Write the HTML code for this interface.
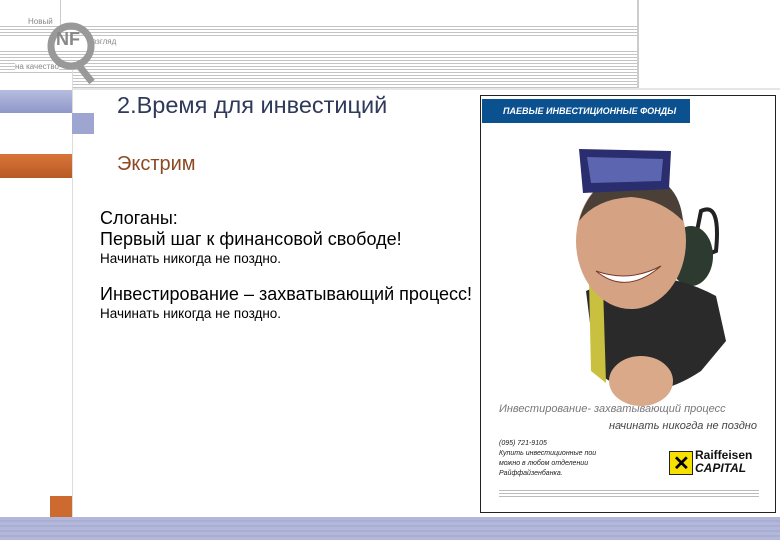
<!DOCTYPE html>
<html><head><meta charset="utf-8"><style>
*{margin:0;padding:0}
body{width:780px;height:540px;position:relative;overflow:hidden;background:#fff;font-family:"Liberation Sans",Arial,sans-serif}
.a{position:absolute}
.t{position:absolute;white-space:nowrap}
</style></head><body>
<!-- top ruled lines -->
<div class="a" style="left:0;top:25px;width:638px;height:12px;background:repeating-linear-gradient(#fff 0 1px,#c4c4c4 1px 2px,#fff 2px 3px)"></div>
<div class="a" style="left:0;top:50px;width:638px;height:38px;background:repeating-linear-gradient(#fff 0 1px,#c4c4c4 1px 2px,#fff 2px 3px)"></div>
<div class="a" style="left:0;top:73px;width:72px;height:17px;background:#fff"></div>
<div class="a" style="left:637px;top:0;width:2px;height:89px;background:#ccc"></div>
<div class="a" style="left:72px;top:88px;width:708px;height:2px;background:#e6e6e6"></div>
<div class="a" style="left:60px;top:0;width:1px;height:26px;background:#ccc"></div>
<div class="a" style="left:72px;top:70px;width:1px;height:470px;background:#ddd"></div>
<!-- logo -->
<div class="t" style="left:28px;top:17px;font-size:8px;color:#888;background:#fff">Новый</div>
<div class="t" style="left:92px;top:37px;font-size:8px;color:#888;background:#fff">взгляд</div>
<div class="t" style="left:15px;top:62px;font-size:8px;color:#888;background:#fff">на качество</div>
<svg class="a" style="left:44px;top:22px" width="56" height="62" viewBox="0 0 56 62">
<circle cx="27" cy="24" r="20" fill="none" stroke="#999" stroke-width="7"/>
<path d="M32 40 L48 60" stroke="#999" stroke-width="7"/>
<text x="12" y="23" font-family="Liberation Sans" font-weight="bold" font-size="18" fill="#888">NF</text>
</svg>
<!-- left bars -->
<div class="a" style="left:0;top:90px;width:72px;height:23px;background:linear-gradient(#b7bde0,#8f97c8)"></div>
<div class="a" style="left:72px;top:113px;width:22px;height:21px;background:#9ea5d0"></div>
<div class="a" style="left:0;top:154px;width:72px;height:24px;background:linear-gradient(#d9753a,#b85a25)"></div>
<div class="a" style="left:50px;top:496px;width:22px;height:21px;background:#cc6a30"></div>
<div class="a" style="left:0;top:517px;width:780px;height:23px;background:repeating-linear-gradient(#b3b7da 0 3px,#a9aed5 3px 5px)"></div>
<!-- text -->
<div class="t" style="left:117px;top:92px;font-size:23.5px;color:#2f3a5a">2.Время для инвестиций</div>
<div class="t" style="left:117px;top:153px;font-size:20px;color:#8c4a24">Экстрим</div>
<div class="t" style="left:100px;top:208px;font-size:18px;color:#000">Слоганы:</div>
<div class="t" style="left:100px;top:229px;font-size:18px;color:#000">Первый шаг к финансовой свободе!</div>
<div class="t" style="left:100px;top:251px;font-size:13.5px;color:#000">Начинать никогда не поздно.</div>
<div class="t" style="left:100px;top:284px;font-size:18px;color:#000">Инвестирование – захватывающий процесс!</div>
<div class="t" style="left:100px;top:306px;font-size:13.5px;color:#000">Начинать никогда не поздно.</div>
<!-- poster -->
<div class="a" style="left:480px;top:95px;width:294px;height:416px;border:1px solid #222;background:#fff;overflow:hidden">
 <div class="a" style="left:1px;top:3px;width:208px;height:24px;background:#0b5190"></div>
 <div class="t" style="left:22px;top:10px;font-size:9px;font-weight:bold;font-style:italic;color:#fff">ПАЕВЫЕ ИНВЕСТИЦИОННЫЕ ФОНДЫ</div>
 <svg class="a" style="left:70px;top:25px" width="200" height="290" viewBox="0 0 200 290">
  <path d="M150 90 Q170 80 165 130 L140 140Z" fill="none" stroke="#222" stroke-width="4"/>
  <ellipse cx="140" cy="135" rx="22" ry="30" fill="#2d3a30"/>
  <path d="M35 170 Q100 140 165 175 L175 220 L150 250 Q90 290 45 250 Z" fill="#2a2a2a"/>
  <ellipse cx="90" cy="260" rx="32" ry="25" fill="#d9a98a"/>
  <path d="M38 160 L40 250 L55 262 L52 165Z" fill="#c9c040"/>
  <ellipse cx="80" cy="120" rx="55" ry="68" fill="#d5a283"/>
  <path d="M28 100 Q40 55 85 52 Q128 56 132 100 Q110 78 80 76 Q45 78 28 100Z" fill="#4a4038"/>
  <path d="M28 28 L120 30 L118 68 L32 72Z" fill="#2a2d6e"/>
  <path d="M36 36 L112 38 L110 60 L40 62Z" fill="#5c66b0"/>
  <path d="M45 150 Q75 175 110 145 Q78 162 45 150Z" fill="#fff" stroke="#7a3a2a"/>
 </svg>
 <div class="t" style="left:18px;top:307px;font-size:11px;font-style:italic;color:#777">Инвестирование- захватывающий процесс</div>
 <div class="t" style="left:128px;top:324px;font-size:11px;font-style:italic;color:#444">начинать никогда не поздно</div>
 <div class="t" style="left:18px;top:343px;font-size:7px;font-style:italic;line-height:10px;color:#222">(095) 721-9105<br>Купить инвестиционные пои<br>можно в любом отделении<br>Райффайзенбанка.</div>
 <div class="a" style="left:188px;top:355px;width:22px;height:22px;background:#f5e000;border:1px solid #222"></div>
 <div class="t" style="left:192px;top:355px;font-size:20px;font-weight:bold;color:#000">✕</div>
 <div class="t" style="left:214px;top:353px;font-size:12px;font-weight:bold;line-height:13px;color:#111">Raiffeisen<br><i>CAPITAL</i></div>
 <div class="a" style="left:18px;top:393px;width:260px;height:10px;background:repeating-linear-gradient(#fff 0 1px,#bbb 1px 2px,#fff 2px 3px)"></div>
</div>
</body></html>
